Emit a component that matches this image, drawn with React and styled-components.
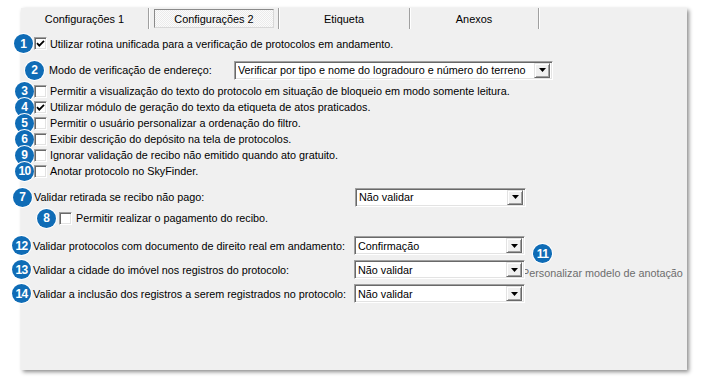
import React from "react";
import styled, { createGlobalStyle } from "styled-components";

const Global = createGlobalStyle`
  html, body { margin: 0; padding: 0; background: #ffffff; }
  body { font-family: "Liberation Sans", Arial, sans-serif; font-size: 10.8px; color: #000; }
  * { box-sizing: border-box; }
`;

const Page = styled.div`
  padding: 8px 0 0 21px;
  width: 704px;
  height: 383px;
`;

const Panel = styled.div`
  width: 666px;
  height: 362px;
  background: #f0f0f0;
  box-shadow: 2px 2px 4px rgba(0, 0, 0, 0.45);
  display: flex;
  flex-direction: column;
`;

const TabBar = styled.div`
  display: flex;
  height: 21px;
`;

const Tab = styled.div`
  width: ${(p) => p.$w}px;
  height: 21px;
  border-right: 1px solid #a0a0a0;
  box-shadow: 1px 0 0 #ffffff;
  display: flex;
  align-items: center;
  justify-content: center;
  font-size: 10.9px;
  padding: ${(p) => (p.$selected ? "1px 4px 1px 5px" : "0")};
`;

const TabFace = styled.div`
  flex: 1;
  align-self: stretch;
  display: flex;
  align-items: center;
  justify-content: center;
  border: 1px solid;
  border-color: #8a8a8a #d8d8d8 #d8d8d8 #8a8a8a;
  background-color: #f8f8f8;
  background-image: repeating-conic-gradient(#ebebeb 0 25%, #fbfbfb 0 50%);
  background-size: 2px 2px;
`;

const Content = styled.div`
  display: flex;
  flex-direction: column;
`;

const Row = styled.div`
  display: flex;
  align-items: center;
  height: ${(p) => p.$h}px;
  margin-top: ${(p) => p.$mt}px;
  margin-left: ${(p) => p.$ml || 0}px;
`;

const Badge = styled.div`
  position: relative;
  z-index: 1;
  flex: none;
  width: 19px;
  height: 19px;
  border-radius: 50%;
  background: #0f6cb6;
  box-shadow: 0 0 0 1px #ffffff;
  color: #ffffff;
  font-family: "Liberation Sans", Arial, sans-serif;
  font-weight: bold;
  font-size: 12px;
  letter-spacing: ${(p) => (p.$wide ? "-0.6px" : "0")};
  display: flex;
  align-items: center;
  justify-content: center;
  margin-left: ${(p) => p.$ml || 0}px;
`;

const Box = styled.div`
  position: relative;
  z-index: 2;
  flex: none;
  width: 13px;
  height: 13px;
  background: #ffffff;
  border: 1px solid;
  border-color: #a0a0a0 #ffffff #ffffff #a0a0a0;
  box-shadow: inset 1px 1px 0 #696969, inset -1px -1px 0 #e3e3e3;
  margin-left: ${(p) => p.$ml || 0}px;
  display: flex;
  align-items: center;
  justify-content: center;
`;

const Label = styled.span`
  white-space: nowrap;
  margin-left: ${(p) => p.$ml || 0}px;
  width: ${(p) => (p.$w ? `${p.$w}px` : "auto")};
  flex: none;
  color: ${(p) => (p.$muted ? "#6d6d6d" : "#000")};
`;

const Combo = styled.div`
  position: relative;
  z-index: 2;
  flex: none;
  width: ${(p) => p.$w}px;
  height: 19px;
  background: #ffffff;
  border: 1px solid;
  border-color: #a0a0a0 #ffffff #ffffff #a0a0a0;
  box-shadow: inset 1px 1px 0 #696969, inset -1px -1px 0 #e3e3e3;
  display: flex;
  align-items: center;
  padding: 2px 2px 2px 3px;
`;

const ComboText = styled.span`
  flex: 1;
  white-space: nowrap;
  overflow: hidden;
`;

const ComboButton = styled.div`
  flex: none;
  width: 16px;
  height: 15px;
  background: #f0f0f0;
  border: 1px solid;
  border-color: #e3e3e3 #696969 #696969 #e3e3e3;
  box-shadow: inset 1px 1px 0 #ffffff, inset -1px -1px 0 #a0a0a0;
  display: flex;
  align-items: center;
  justify-content: center;
`;

const Group = styled.div`
  display: flex;
  margin-top: 10px;
`;

const Stack = styled.div`
  display: flex;
  flex-direction: column;
  gap: 5px;
`;

const Aside = styled.div`
  display: flex;
  flex-direction: column;
  align-items: flex-start;
  margin-left: -3px;
  padding-top: 8px;
`;

const AsideBadge = styled(Badge)`
  margin-left: 11px;
  margin-bottom: 4px;
`;

const Check = () => (
  <svg width="9" height="9" viewBox="0 0 9 9">
    <path d="M1 4.2 L3.3 6.6 L8 1.8" fill="none" stroke="#000" strokeWidth="1.8" />
  </svg>
);

const Arrow = () => (
  <svg width="7" height="4" viewBox="0 0 7 4">
    <path d="M0 0 H7 L3.5 4 Z" fill="#000" />
  </svg>
);

const Select = ({ w, value }) => (
  <Combo $w={w}>
    <ComboText>{value}</ComboText>
    <ComboButton>
      <Arrow />
    </ComboButton>
  </Combo>
);

const checkRows = [
  { n: "3", text: "Permitir a visualização do texto do protocolo em situação de bloqueio em modo somente leitura.", checked: false },
  { n: "4", text: "Utilizar módulo de geração do texto da etiqueta de atos praticados.", checked: true },
  { n: "5", text: "Permitir o usuário personalizar a ordenação do filtro.", checked: false },
  { n: "6", text: "Exibir descrição do depósito na tela de protocolos.", checked: false },
  { n: "9", text: "Ignorar validação de recibo não emitido quando ato gratuito.", checked: false },
  { n: "10", text: "Anotar protocolo no SkyFinder.", checked: false },
];

const selectRows = [
  { n: "12", text: "Validar protocolos com documento de direito real em andamento:", value: "Confirmação" },
  { n: "13", text: "Validar a cidade do imóvel nos registros do protocolo:", value: "Não validar" },
  { n: "14", text: "Validar a inclusão dos registros a serem registrados no protocolo:", value: "Não validar" },
];

export default function App() {
  return (
    <>
      <Global />
      <Page>
        <Panel>
          <TabBar>
            <Tab $w={128}>Configurações 1</Tab>
            <Tab $w={130} $selected>
              <TabFace>Configurações 2</TabFace>
            </Tab>
            <Tab $w={131}>Etiqueta</Tab>
            <Tab $w={129}>Anexos</Tab>
          </TabBar>
          <Content>
            <Row $h={17} $mt={6}>
              <Badge $ml={-7}>1</Badge>
              <Box $ml={1}>
                <Check />
              </Box>
              <Label $ml={3}>Utilizar rotina unificada para a verificação de protocolos em andamento.</Label>
            </Row>
            <Row $h={20} $mt={8}>
              <Badge $ml={4}>2</Badge>
              <Label $ml={5} $w={185}>Modo de verificação de endereço:</Label>
              <Select w={319} value="Verificar por tipo e nome do logradouro e número do terreno" />
            </Row>
            {checkRows.map((r, i) => (
              <Row key={r.n} $h={16} $mt={i === 0 ? 3 : 0}>
                <Badge $ml={-6} $wide={r.n.length > 1}>{r.n}</Badge>
                <Box>{r.checked && <Check />}</Box>
                <Label $ml={3}>{r.text}</Label>
              </Row>
            ))}
            <Row $h={20} $mt={8}>
              <Badge $ml={-8}>7</Badge>
              <Label $ml={2} $w={321}>Validar retirada se recibo não pago:</Label>
              <Select w={171} value="Não validar" />
            </Row>
            <Row $h={16} $mt={3}>
              <Badge $ml={16}>8</Badge>
              <Box $ml={3} />
              <Label $ml={4}>Permitir realizar o pagamento do recibo.</Label>
            </Row>
            <Group>
              <Stack>
                {selectRows.map((r) => (
                  <Row key={r.n} $h={19} $mt={0}>
                    <Badge $ml={-9} $wide>{r.n}</Badge>
                    <Label $ml={2} $w={321}>{r.text}</Label>
                    <Select w={171} value={r.value} />
                  </Row>
                ))}
              </Stack>
              <Aside>
                <AsideBadge $wide>11</AsideBadge>
                <Label $muted>Personalizar modelo de anotação</Label>
              </Aside>
            </Group>
          </Content>
        </Panel>
      </Page>
    </>
  );
}
